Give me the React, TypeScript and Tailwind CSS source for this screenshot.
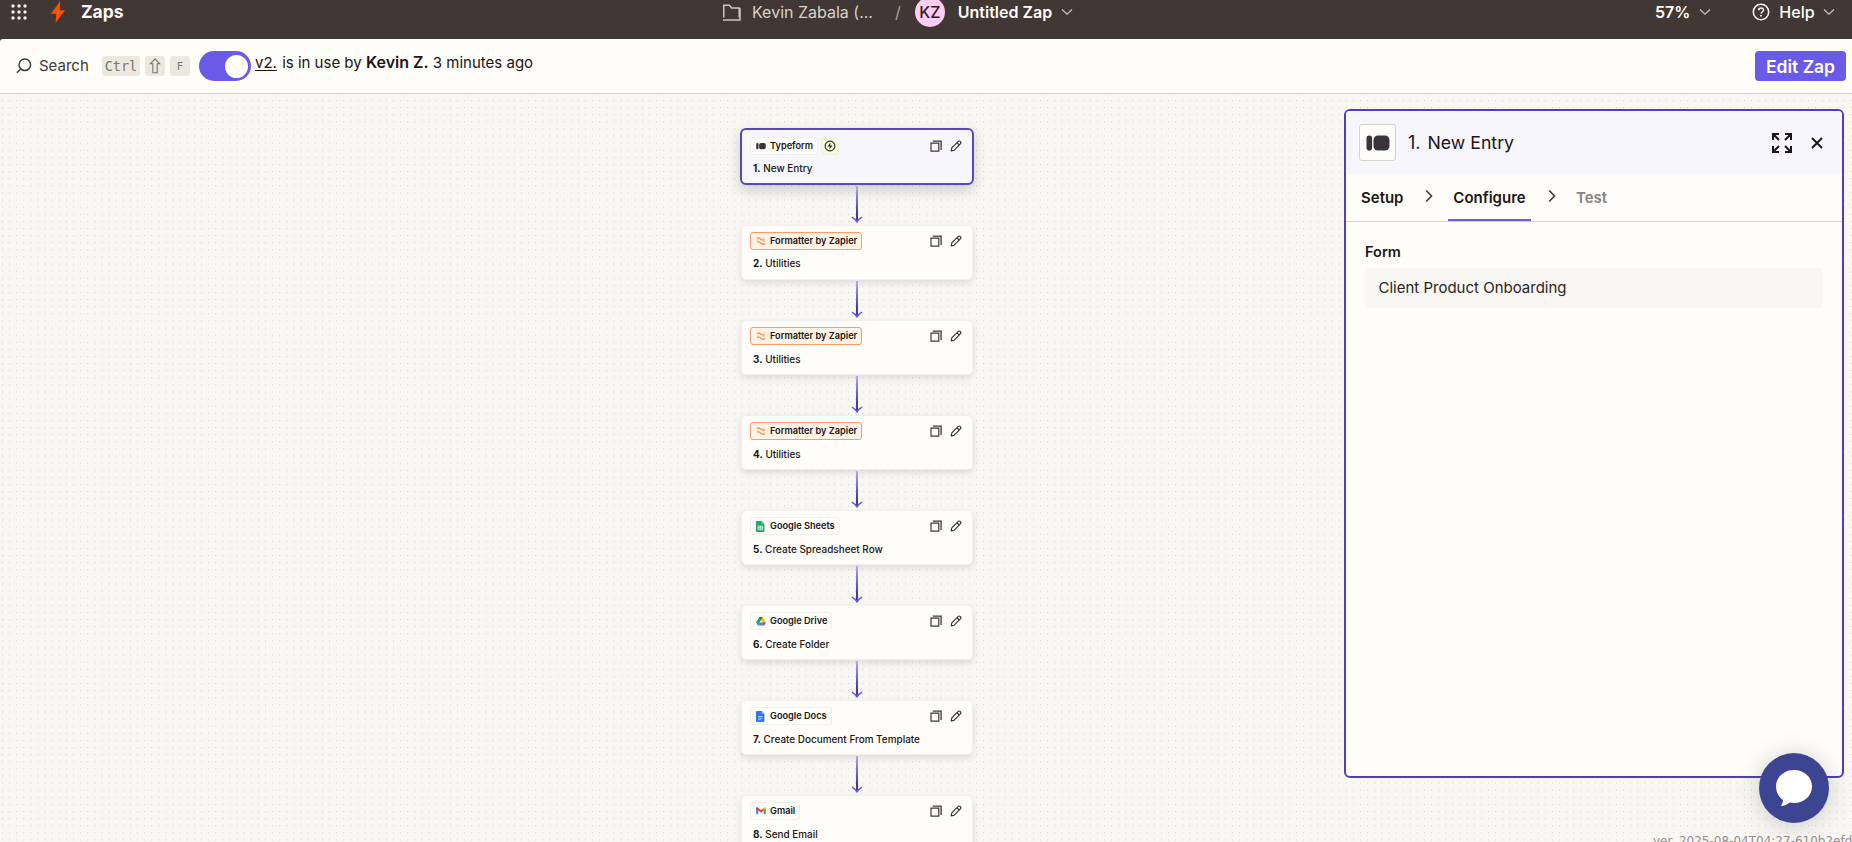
import React from "react";

type AppName = "typeform" | "formatter" | "sheets" | "drive" | "docs" | "gmail";

interface Step {
  app: AppName;
  label: string;
  title: string;
}

const steps: Step[] = [
  { app: "typeform", label: "Typeform", title: "New Entry" },
  { app: "formatter", label: "Formatter by Zapier", title: "Utilities" },
  { app: "formatter", label: "Formatter by Zapier", title: "Utilities" },
  { app: "formatter", label: "Formatter by Zapier", title: "Utilities" },
  { app: "sheets", label: "Google Sheets", title: "Create Spreadsheet Row" },
  { app: "drive", label: "Google Drive", title: "Create Folder" },
  { app: "docs", label: "Google Docs", title: "Create Document From Template" },
  { app: "gmail", label: "Gmail", title: "Send Email" },
];

function AppIcon({ app }: { app: AppName }) {
  switch (app) {
    case "typeform":
      return (
        <svg viewBox="0 0 24 24" className="size-full" fill="#3b333b">
          <rect x="0.5" y="4.5" width="5.600" height="15" rx="2.800" />
          <rect x="7.500" y="4.500" width="16" height="15" rx="4.600" />
        </svg>
      );
    case "formatter":
      return (
        <svg viewBox="0 0 24 24" className="size-full" fill="none" stroke="#f97f45">
          <path d="M2 5h5c4 0 4 4.500 8 4.500h7" strokeWidth="2.600" />
          <path d="M2 14.500h5c4 0 4 5 8 5h7" strokeWidth="2.600" />
          <path d="M12 5.500h8M2 12h4M14 14h8" strokeWidth="1.500" opacity=".45" />
        </svg>
      );
    case "sheets":
      return (
        <svg viewBox="2.500 0 22 24" className="h-[11px] w-[10px]">
          <path d="M4.500 0H15l6 6v16a2 2 0 0 1-2 2H4.500a2 2 0 0 1-2-2V2a2 2 0 0 1 2-2z" fill="#23a566" />
          <path d="M15 0l6 6h-6z" fill="#8ed1b1" />
          <path d="M7 11h10v8H7zM7 15h10M12 11v8" fill="none" stroke="#fff" strokeWidth="1.600" />
        </svg>
      );
    case "drive":
      return (
        <svg viewBox="0 0 24 24" className="size-full">
          <path d="M8 2.500h8L8.200 16 4.200 22.500 0.500 15.500z" fill="#1ea362" />
          <path d="M8 2.500h8l-4 7z" fill="#188038" />
          <path d="M16 2.500l7.500 13h-8L12 9.500z" fill="#fbbc04" />
          <path d="M8.200 15.500h15.300l-4 7H4.200z" fill="#4285f4" />
          <path d="M15.500 15.500h8l-4 7z" fill="#ea4335" />
        </svg>
      );
    case "docs":
      return (
        <svg viewBox="2.500 0 22 24" className="h-[11px] w-[10px]">
          <path d="M4.500 0H15l6 6v16a2 2 0 0 1-2 2H4.500a2 2 0 0 1-2-2V2a2 2 0 0 1 2-2z" fill="#2f74f0" />
          <path d="M15 0l6 6h-6z" fill="#a1c2fa" />
          <path d="M7 12h10M7 15.500h10M7 19h7" stroke="#d5e4fd" strokeWidth="1.500" />
        </svg>
      );
    case "gmail":
      return (
        <svg viewBox="0 0 24 24" className="size-full">
          <path d="M0.500 5.500v14.500h5V10.500z" fill="#4285f4" />
          <path d="M18.500 10.500V20h5V5.500z" fill="#34a853" />
          <path d="M18.500 4.500v6.500l5-3.800V5.500c0-2.500-2.500-3-4-1.800z" fill="#fbbc04" />
          <path d="M5.500 4.500L12 9.400l6.500-4.900V11L12 16 5.500 11z" fill="#ea4335" />
          <path d="M0.500 5.500v1.700l5 3.800V4.500l-1-.8c-1.500-1.200-4-.7-4 1.800z" fill="#c5221f" />
        </svg>
      );
  }
}

function CopyIcon() {
  return (
    <svg viewBox="0 0 12 12" className="h-[12px] w-[12px]" fill="none" stroke="#413735">
      <path d="M1 3.200h7.800v7.900H1z" strokeWidth="1.200" />
      <path d="M2.800 1.100h8.300v8.900" strokeWidth="1.300" />
    </svg>
  );
}

function PencilIcon() {
  return (
    <svg viewBox="0 0 12 12" className="h-[12px] w-[12px]" fill="none" stroke="#2d2e2e" strokeWidth="1.100">
      <path d="M1.200 10.900l.6-3L8.300 1.400a1.200 1.200 0 0 1 1.700 0l.6.600a1.200 1.200 0 0 1 0 1.700L4.200 10.200z" strokeLinejoin="round" />
      <path d="M7 2.800L9.300 5" />
    </svg>
  );
}

function ChevronDown({ className = "" }: { className?: string }) {
  return (
    <svg viewBox="0 0 12 8" className={`h-[8px] w-[12px] ${className}`} fill="none" stroke="#c9c4bd" strokeWidth="1.300">
      <path d="M1 1.500l5 4.700 5-4.700" />
    </svg>
  );
}

function Connector() {
  return (
    <svg viewBox="0 0 12 38" className="h-[38px] w-[12px] shrink-0" fill="none">
      <defs>
        <linearGradient id="line" x1="0" y1="0" x2="0" y2="1">
          <stop offset="0" stopColor="#b3abf6" />
          <stop offset="0.75" stopColor="#4736ae" />
          <stop offset="1" stopColor="#4736ae" />
        </linearGradient>
      </defs>
      <rect x="5" y="0" width="2" height="36" fill="url(#line)" />
      <path d="M0.900 31.200c1.800.9 3.800 2.400 5.100 4.700 1.300-2.300 3.300-3.800 5.100-4.700" stroke="#6558e0" strokeWidth="1.400" />
    </svg>
  );
}

function StepCard({ step, index }: { step: Step; index: number }) {
  const active = index === 0;
  const formatter = step.app === "formatter";
  return (
    <div
      className={`flex h-[55px] w-[232px] shrink-0 flex-col rounded-[5px] ${
        active
          ? "bg-[#f7f6fd] pt-[8px] pr-[1px] pl-[9px] shadow-[0_5px_12px_2px_rgba(45,46,46,0.18)] outline-2 -outline-offset-1 outline-[#5948bd]"
          : "border border-[#f1f0ec] bg-[#fffdf9] pt-[6px] pl-[8px] shadow-[0_3px_6px_rgba(45,46,46,0.13)]"
      }`}
    >
      <div className="flex h-[18px] items-center pr-[10px]">
        <div
          className={`flex h-[18px] items-center gap-[4px] rounded-[3px] border pr-[4px] pl-[5px] ${
            formatter ? "border-[#fb9a6e] bg-[#fff3e6]" : "border-[#f1efea] bg-[#fffdf9]"
          }`}
        >
          <div className="size-[10px]">
            <AppIcon app={step.app} />
          </div>
          <span className="text-[9.200px] leading-none font-semibold whitespace-nowrap">{step.label}</span>
        </div>
        {active && (
          <div className="ml-[3px] flex size-[18px] items-center justify-center rounded-[3px] border border-[#eef2da] bg-[#f3fbd7]">
            <svg viewBox="0 0 12 12" className="size-[12px] shrink-0">
              <circle cx="6" cy="6" r="4.900" fill="none" stroke="#2d2e2e" strokeWidth="1.100" />
              <path d="M6.600 2.500L3.500 6.600h2.200L5.400 9.500l3.100-4.100H6.300z" fill="#2d2e2e" />
            </svg>
          </div>
        )}
        <div className="ml-auto flex gap-[8px]">
          <CopyIcon />
          <PencilIcon />
        </div>
      </div>
      <div className={`pl-[3px] text-[9.950px] leading-[14px] font-medium whitespace-nowrap ${index < 2 ? "mt-[6px]" : "mt-[7px]"}`}>
        <span className="font-bold">{index + 1}.</span> {step.title}
      </div>
    </div>
  );
}

function Header() {
  return (
    <header className="flex h-[39px] shrink-0 items-start overflow-hidden bg-[#413735] text-[#fffdf9]">
      <div className="flex h-[24px] w-[722px] items-center pl-[11px]">
        <svg viewBox="0 0 16 16" className="size-[16px]" fill="#f4efe8">
          {[2, 8, 14].map((y) => [2, 8, 14].map((x) => <circle key={`${x}-${y}`} cx={x} cy={y} r="1.700" />))}
        </svg>
        <svg viewBox="0 0 16 22" className="ml-[23px] h-[22px] w-[16px]" fill="#ff4f00">
          <path d="M10.200 0L1 12.800h5.200L5.600 22 15 9.300H9.800z" />
        </svg>
        <span className="ml-[15px] pt-[1px] text-[17.500px] font-bold">Zaps</span>
      </div>
      <div className="flex h-[24px] w-[933px] items-center">
        <svg viewBox="0 0 20 18" className="h-[18px] w-[20px]" fill="none" stroke="#cfc8bf" strokeWidth="1.500">
          <path d="M1.800 14.500V2.200h5.700l2 2.800h7.700v9.300" />
          <path d="M1 16.900h17V5" />
        </svg>
        <span className="ml-[10px] w-[134px] text-[16px] text-[#d7d3c9]">Kevin Zabala (...</span>
        <span className="ml-[9px] text-[16px] text-[#a8a39c]">/</span>
        <div className="mt-[-1px] ml-[14px] flex size-[30px] shrink-0 items-center justify-center rounded-full bg-[#ffcdf5] text-[16px] font-medium text-[#2d1f1d]">
          KZ
        </div>
        <span className="ml-[13px] text-[16px] font-semibold">Untitled Zap</span>
        <ChevronDown className="ml-[9px]" />
      </div>
      <div className="flex h-[24px] items-center">
        <span className="text-[16px] font-semibold">57%</span>
        <ChevronDown className="ml-[9px]" />
        <svg viewBox="0 0 18 18" className="ml-[41px] size-[18px]" fill="none" stroke="#fffdf9" strokeWidth="1.500">
          <circle cx="9" cy="9" r="7.700" />
          <path d="M6.600 7.200c0-3 4.900-3 4.900-.2 0 1.800-2.400 1.700-2.400 3.700" />
          <path d="M9 12v1.600" strokeWidth="1.700" />
        </svg>
        <span className="ml-[9px] text-[16px] font-medium">Help</span>
        <ChevronDown className="ml-[8px]" />
      </div>
    </header>
  );
}

function Toolbar() {
  return (
    <div className="h-[55px] shrink-0 bg-[#413735]">
      <div className="flex h-[55px] items-center rounded-tl-[3px] border-b border-[#d0cfcb] bg-[#fffdf9] text-[#201515]">
        <svg viewBox="0 0 16 16" className="ml-[16px] size-[16px] shrink-0" fill="none" stroke="#413735" strokeWidth="1.500">
          <circle cx="8.800" cy="6.800" r="5.800" />
          <path d="M4.500 11.300L0.800 14.800" />
        </svg>
        <span className="ml-[7px] w-[63px] text-[15px] text-[#413735]">Search</span>
        <div className="flex gap-[5px] text-[#7a7370]">
          <kbd className="flex h-[20px] w-[38px] items-center justify-center rounded-[3px] bg-[#ebe9df] font-['DejaVu_Sans_Mono',monospace] text-[13.500px]">
            Ctrl
          </kbd>
          <kbd className="flex h-[20px] w-[20px] items-center justify-center rounded-[3px] bg-[#ebe9df]">
            <svg viewBox="0 0 12 16" className="h-[16px] w-[12px]" fill="none" stroke="#7a7370" strokeWidth="1.100">
              <path d="M6 1l4.800 4.800H8.200v9H3.800v-9H1.200z" />
            </svg>
          </kbd>
          <kbd className="flex h-[20px] w-[20px] items-center justify-center rounded-[3px] bg-[#ebe9df] pt-[2px] font-['DejaVu_Sans_Mono',monospace] text-[10.500px]">
            F
          </kbd>
        </div>
        <div className="ml-[9px] flex h-[30px] w-[52px] shrink-0 items-center justify-end rounded-full bg-[#695be8] pr-[3px]">
          <div className="size-[23px] rounded-full bg-[#fffdf9]" />
        </div>
        <p className="-mt-[8px] ml-[4px] text-[15px] whitespace-nowrap">
          <span className="mr-px underline underline-offset-2">v2.</span> is in use by <span className="text-[16px] font-semibold">Kevin Z.</span> 3 minutes ago
        </p>
        <button className="mr-[6px] ml-auto h-[30px] w-[91px] rounded-[4px] bg-[#695be8] pt-px text-[17.500px] leading-[28px] font-semibold text-[#fffdf9]">
          Edit Zap
        </button>
      </div>
    </div>
  );
}

function TabArrow() {
  return (
    <svg viewBox="0 0 8 14" className="h-[14px] w-[8px]" fill="none" stroke="#413735" strokeWidth="1.600">
      <path d="M1.200 1.500L6.500 7l-5.300 5.500" />
    </svg>
  );
}

function Panel() {
  return (
    <aside className="flex h-[669px] w-[500px] flex-col overflow-hidden rounded-[6px] border-2 border-[#503ebd] bg-[#fffdf9]">
      <div className="flex h-[63px] shrink-0 items-center bg-[#f7f6fd] pl-[13px]">
        <div className="flex size-[37px] items-center justify-center rounded-[3px] border border-[#d7d3c9] bg-[#fffdf9]">
          <div className="size-[24px]">
            <AppIcon app="typeform" />
          </div>
        </div>
        <span className="mt-[-1px] ml-[12px] text-[18px]">1.</span>
        <span className="mt-[1px] ml-[7px] text-[17.700px]">New Entry</span>
        <svg viewBox="0 0 20 20" className="mr-[19px] ml-auto size-[20px]" fill="none" stroke="#201515" strokeWidth="2">
          <path d="M1 7V1h6M13 1h6v6M19 13v6h-6M7 19H1v-6M1.500 1.500L7 7M18.500 1.500L13 7M18.500 18.500L13 13M1.500 18.500L7 13" />
        </svg>
        <svg viewBox="0 0 12 12" className="mr-[19px] size-[12px]" fill="none" stroke="#201515" strokeWidth="1.900">
          <path d="M1 1l10 10M11 1L1 11" />
        </svg>
      </div>
      <div className="flex h-[48px] shrink-0 items-center border-b border-[#d7d3c9] text-[15px] font-semibold">
        <span className="ml-[15px] w-[64px] pt-[1px]">Setup</span>
        <div className="-mt-[4px] w-[23px]">
          <TabArrow />
        </div>
        <div className="flex h-full w-[83px] items-center justify-center border-b-2 border-[#695be8] pt-[3px]">Configure</div>
        <div className="-mt-[4px] ml-[17px] w-[28px]">
          <TabArrow />
        </div>
        <span className="pt-[1px] text-[#88827e]">Test</span>
      </div>
      <div className="px-[19px] pt-[20px]">
        <label className="block text-[14.500px] leading-[20px] font-semibold">Form</label>
        <div className="mt-[6px] flex h-[40px] items-center rounded-[4px] bg-[#f8f7f4] pl-[13.500px] text-[15px] text-[#2d2422]">
          Client Product Onboarding
        </div>
      </div>
    </aside>
  );
}

export default function App() {
  return (
    <div className="flex h-[842px] w-[1852px] flex-col overflow-hidden bg-[#f8f7f4] font-[Inter,sans-serif] text-[#201515]">
      <Header />
      <Toolbar />
      <main className="relative flex h-[748px] justify-between overflow-hidden">
        <svg className="absolute inset-0 size-full">
          <defs>
            <pattern id="dots" x="2" y="6" width="7.110" height="7.110" patternUnits="userSpaceOnUse">
              <circle cx="0.500" cy="0.500" r="0.550" fill="#cfccc5" />
            </pattern>
          </defs>
          <rect width="100%" height="100%" fill="url(#dots)" />
        </svg>
        <section className="relative ml-[741px] flex w-[232px] flex-col items-center pt-[35px]">
          {steps.map((step, i) => (
            <React.Fragment key={i}>
              {i > 0 && (
                <div className={`flex shrink-0 items-start ${i === 1 ? "h-[41px] pt-[2px]" : "h-[40px] pt-[1px]"}`}>
                  <Connector />
                </div>
              )}
              <StepCard step={step} index={i} />
            </React.Fragment>
          ))}
        </section>
        <div className="relative mt-[15px] mr-[8px]">
          <Panel />
        </div>
        <p className="absolute top-[739px] left-[1653px] font-['DejaVu_Sans',sans-serif] text-[12px] leading-[16px] whitespace-nowrap text-[#95908d]">
          ver. 2025-08-04T04:27-610b2efd
        </p>
        <button className="absolute top-[659px] left-[1759px] flex size-[70px] items-center justify-center rounded-full bg-[#3d4592] shadow-[0_2px_24px_rgba(45,46,46,0.22)]">
          <svg viewBox="0 0 36 36" className="size-[36px]" fill="#fff">
            <path d="M18 0C28 0 36 7 36 16.500S28 33 18 33c-1.500 0-3-.2-4.300-.5C11.500 34.500 8.500 35.800 4.800 36c1.500-1.800 2.200-3.800 2.200-6C2.600 27 0 22 0 16.500 0 7 8 0 18 0z" />
          </svg>
        </button>
      </main>
    </div>
  );
}
